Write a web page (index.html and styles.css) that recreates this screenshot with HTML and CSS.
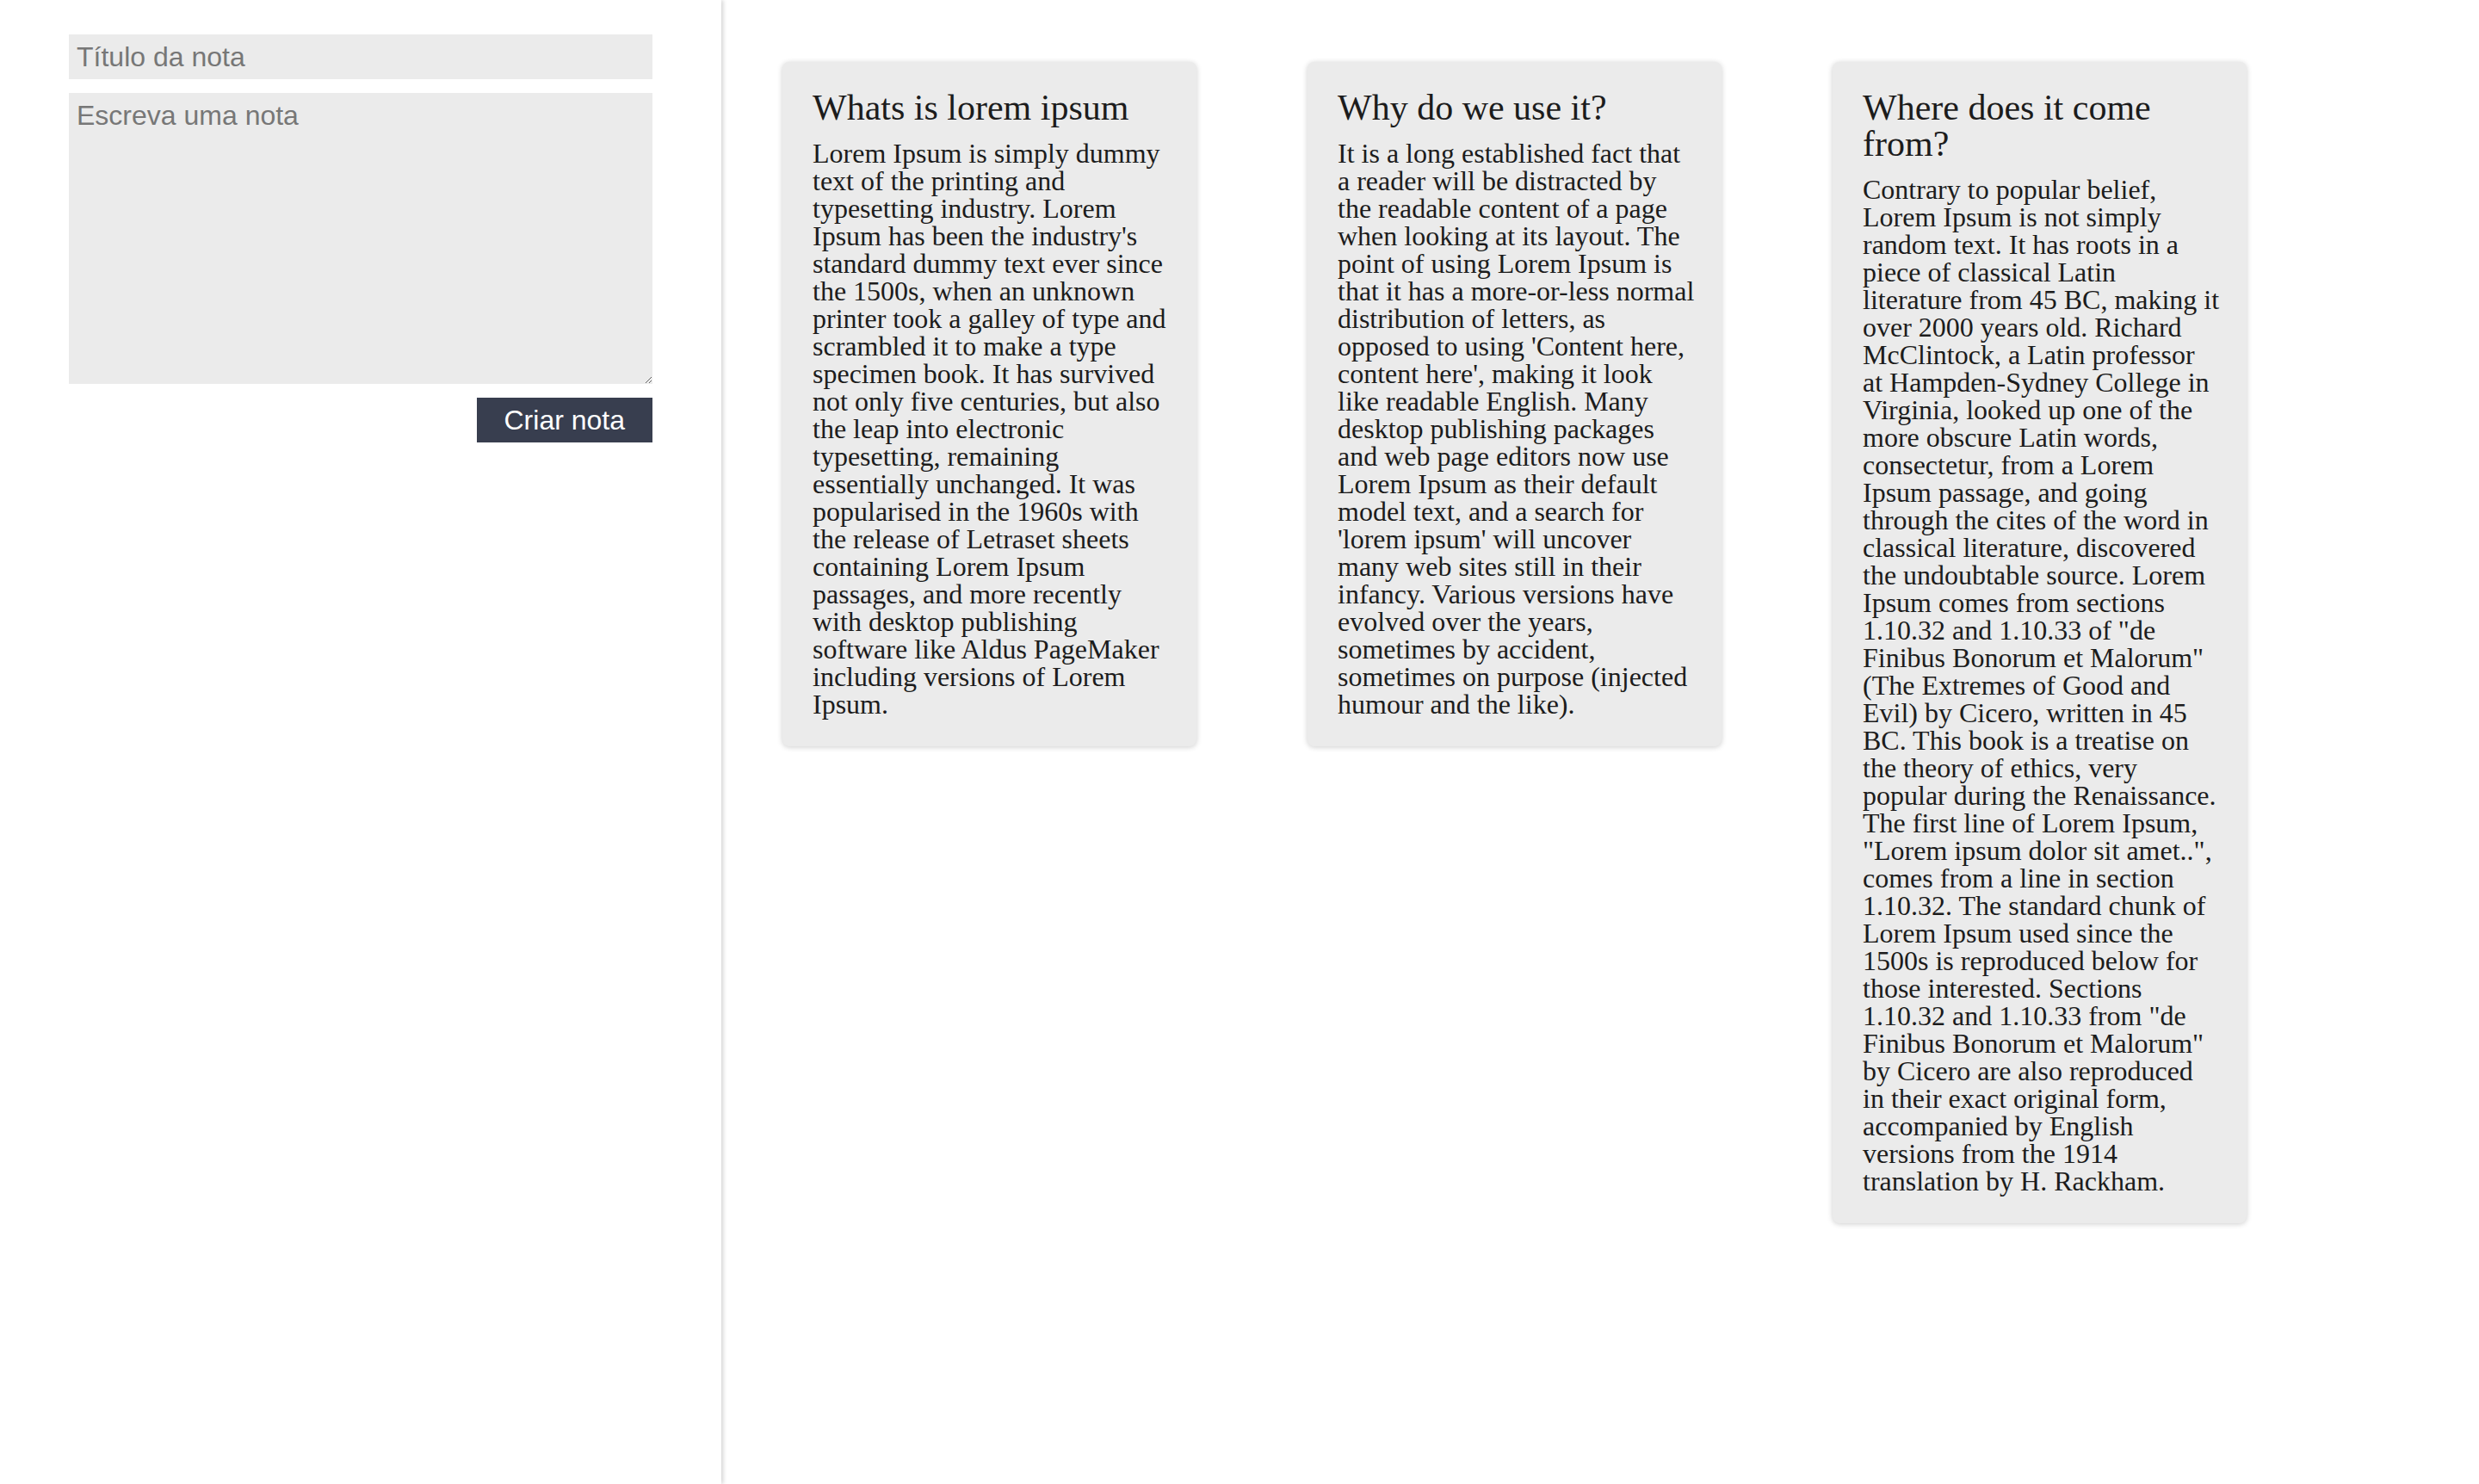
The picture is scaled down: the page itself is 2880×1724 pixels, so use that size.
FILE: index.html
```
<!DOCTYPE html>
<html lang="pt-BR">
<head>
<meta charset="utf-8">
<title>Notas</title>
<link rel="stylesheet" href="styles.css">
</head>
<body>
<div class="app">
  <aside class="sidebar">
    <form class="note-form">
      <input class="field title-field" type="text" placeholder="Título da nota">
      <textarea class="field body-field" placeholder="Escreva uma nota"></textarea>
      <div class="actions">
        <button type="button" class="btn">Criar nota</button>
      </div>
    </form>
  </aside>
  <main class="notes">
    <article class="card">
      <h2 class="card-title">Whats is lorem ipsum</h2>
      <p class="card-text">Lorem Ipsum is simply dummy text of the printing and typesetting industry. Lorem Ipsum has been the industry's standard dummy text ever since the 1500s, when an unknown printer took a galley of type and scrambled it to make a type specimen book. It has survived not only five centuries, but also the leap into electronic typesetting, remaining essentially unchanged. It was popularised in the 1960s with the release of Letraset sheets containing Lorem Ipsum passages, and more recently with desktop publishing software like Aldus PageMaker including versions of Lorem Ipsum.</p>
    </article>
    <article class="card">
      <h2 class="card-title">Why do we use it?</h2>
      <p class="card-text">It is a long established fact that a reader will be distracted by the readable content of a page when looking at its layout. The point of using Lorem Ipsum is that it has a more-or-less normal distribution of letters, as opposed to using 'Content here, content here', making it look like readable English. Many desktop publishing packages and web page editors now use Lorem Ipsum as their default model text, and a search for 'lorem ipsum' will uncover many web sites still in their infancy. Various versions have evolved over the years, sometimes by accident, sometimes on purpose (injected humour and the like).</p>
    </article>
    <article class="card">
      <h2 class="card-title">Where does it come from?</h2>
      <p class="card-text">Contrary to popular belief, Lorem Ipsum is not simply random text. It has roots in a piece of classical Latin literature from 45 BC, making it over 2000 years old. Richard McClintock, a Latin professor at Hampden-Sydney College in Virginia, looked up one of the more obscure Latin words, consectetur, from a Lorem Ipsum passage, and going through the cites of the word in classical literature, discovered the undoubtable source. Lorem Ipsum comes from sections 1.10.32 and 1.10.33 of "de Finibus Bonorum et Malorum" (The Extremes of Good and Evil) by Cicero, written in 45 BC. This book is a treatise on the theory of ethics, very popular during the Renaissance. The first line of Lorem Ipsum, "Lorem ipsum dolor sit amet..", comes from a line in section 1.10.32. The standard chunk of Lorem Ipsum used since the 1500s is reproduced below for those interested. Sections 1.10.32 and 1.10.33 from "de Finibus Bonorum et Malorum" by Cicero are also reproduced in their exact original form, accompanied by English versions from the 1914 translation by H. Rackham.</p>
    </article>
  </main>
</div>
</body>
</html>
```
FILE: styles.css
```
* {
  box-sizing: border-box;
}

html, body {
  margin: 0;
  padding: 0;
  height: 100%;
  background: #ffffff;
}

body {
  font-family: "Liberation Serif", "Times New Roman", serif;
  color: #1c1c1c;
}

.app {
  display: flex;
  min-height: 100vh;
}

.sidebar {
  flex: 0 0 838px;
  width: 838px;
  min-height: 100vh;
  padding: 40px 80px;
  background: #ffffff;
  box-shadow: 2px 0 5px rgba(0, 0, 0, 0.18);
  position: relative;
  z-index: 1;
}

.note-form {
  display: flex;
  flex-direction: column;
}

.field {
  display: block;
  width: 100%;
  border: none;
  outline: none;
  background: #ebebeb;
  font-family: "Liberation Sans", Arial, sans-serif;
  font-size: 32px;
  color: #333;
  padding: 0 9px;
  margin: 0;
}

.field::placeholder {
  color: #777;
  opacity: 1;
}

.title-field {
  height: 52px;
}

.body-field {
  height: 338px;
  margin-top: 16px;
  padding-top: 8px;
  line-height: 1.15;
  resize: vertical;
}

.actions {
  display: flex;
  justify-content: flex-end;
  margin-top: 16px;
}

.btn {
  height: 52px;
  padding: 0 32px;
  border: none;
  background: #383e4f;
  color: #ffffff;
  font-family: "Liberation Sans", Arial, sans-serif;
  font-size: 32px;
  cursor: pointer;
}

.notes {
  flex: 1;
  display: flex;
  align-items: flex-start;
  gap: 129px;
  padding: 72px 0 0 71px;
}

.card {
  flex: 0 0 481px;
  width: 481px;
  background: #ebebeb;
  border-radius: 8px;
  box-shadow: 0 1px 6px rgba(0, 0, 0, 0.2);
  padding: 32px 30px 33px 35px;
}

.card-title {
  margin: 0 0 16px;
  font-size: 42px;
  font-weight: normal;
  line-height: 42px;
}

.card-text {
  margin: 0;
  font-size: 32px;
  line-height: 32px;
}
```
